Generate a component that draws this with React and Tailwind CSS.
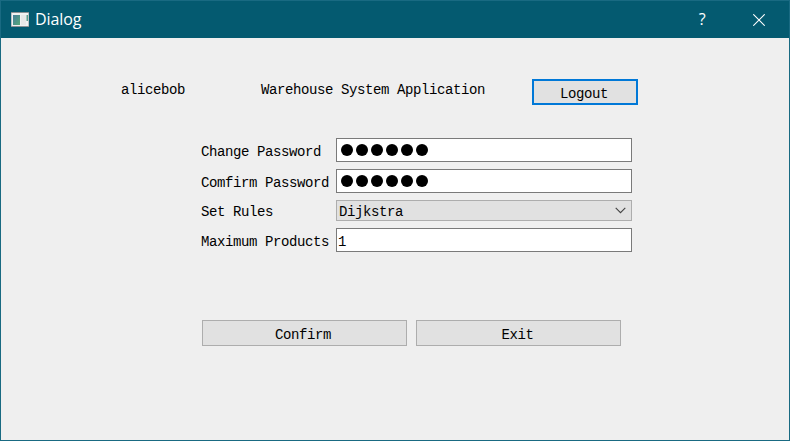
const passwordDots = [0, 1, 2, 3, 4, 5];

function PasswordField() {
  return (
    <div className="flex h-6 w-[296px] items-center gap-[3px] border border-[#7a7a7a] bg-white pl-1">
      {passwordDots.map((dot) => (
        <span key={dot} className="size-3 rounded-full bg-black" />
      ))}
    </div>
  );
}

function Row({ label, className, labelClassName, children }) {
  return (
    <div className={`flex ${className}`}>
      <label className={`w-[136px] shrink-0 whitespace-pre pl-px tracking-[-0.4px] ${labelClassName}`}>{label}</label>
      {children}
    </div>
  );
}

function TitleBar() {
  return (
    <header className="flex h-[37px] items-center bg-[#045a70] pl-[10px] text-white">
      <svg className="mt-[-2px] h-4 w-[18px]" viewBox="0 0 18 16">
        <defs>
          <linearGradient id="pane" x1="0" y1="0" x2="1" y2="1">
            <stop offset="0" stopColor="#477f9b" />
            <stop offset="1" stopColor="#58a879" />
          </linearGradient>
        </defs>
        <rect x="0" y="1" width="18" height="15" fill="#8b9194" />
        <rect x="0.5" y="2" width="17" height="13" fill="#f2f2f2" />
        <rect x="2" y="4" width="7" height="10" fill="url(#pane)" />
        <rect x="10" y="4" width="5" height="10" fill="#e8e8e8" />
        <rect x="15.5" y="4" width="1.5" height="6" fill="#5b9d8c" />
      </svg>
      <h1 className="-mt-px ml-[6px] font-['Open_Sans','Noto_Sans',sans-serif] text-[16px] leading-5 tracking-[-0.1px]">
        Dialog
      </h1>
      <button className="-mt-px ml-auto mr-[43px] flex w-4 justify-center font-['Open_Sans','Noto_Sans',sans-serif] text-[16px] leading-5">
        ?
      </button>
      <button className="mr-6 size-3" aria-label="Close">
        <svg className="block size-3" viewBox="0 0 12 12" fill="none" stroke="#fff" strokeWidth="1.1">
          <path d="M0.3 0.3 11.7 11.7M11.7 0.3 0.3 11.7" />
        </svg>
      </button>
    </header>
  );
}

export default function App() {
  return (
    <div className="h-[441px] w-[790px] border border-[#196a82] bg-[#efefef] font-['Liberation_Mono',monospace] text-[14px] leading-4 tracking-[-0.4px] text-black">
      <TitleBar />
      <main>
        <div className="flex pl-[120px] pt-[41px]">
          <span className="w-[140px] pt-[3px]">alicebob</span>
          <span className="w-[271px] pt-[3px]">Warehouse System Application</span>
          <button className="flex h-[26px] w-[106px] justify-center border-2 border-[#0078d7] bg-[#e1e1e1] pr-0.5 pt-[5px]">
            Logout
          </button>
        </div>
        <form className="ml-[199px] mt-[33px]">
          <Row label="Change Password" className="h-[31px]" labelClassName="pt-[6px]">
            <PasswordField />
          </Row>
          <Row label="Comfirm Password" className="h-[31px]" labelClassName="pt-[6px]">
            <PasswordField />
          </Row>
          <Row label="Set Rules" className="h-7" labelClassName="pt-[4px]">
            <div className="flex h-[21px] w-[296px] justify-between border border-[#adadad] bg-[#e1e1e1] pl-[2px] pr-[5px] pt-[3px]">
              <span>Dijkstra</span>
              <svg className="mt-[3px] h-[7px] w-[11px]" viewBox="0 0 11 7" fill="none" stroke="#444" strokeWidth="1.1">
                <path d="M0.7 0.9 5.5 5.7 10.3 0.9" />
              </svg>
            </div>
          </Row>
          <Row label="Maximum Products" className="h-6" labelClassName="pt-[6px]">
            <div className="h-6 w-[296px] border border-[#7a7a7a] bg-white pl-px pt-[5px]">1</div>
          </Row>
        </form>
        <div className="ml-[201px] mt-[68px] flex gap-[9px]">
          <button className="flex h-[26px] w-[205px] justify-center border border-[#adadad] bg-[#e1e1e1] pr-[3px] pt-[6px]">
            Confirm
          </button>
          <button className="flex h-[26px] w-[205px] justify-center border border-[#adadad] bg-[#e1e1e1] pr-0.5 pt-[6px]">
            Exit
          </button>
        </div>
      </main>
    </div>
  );
}
